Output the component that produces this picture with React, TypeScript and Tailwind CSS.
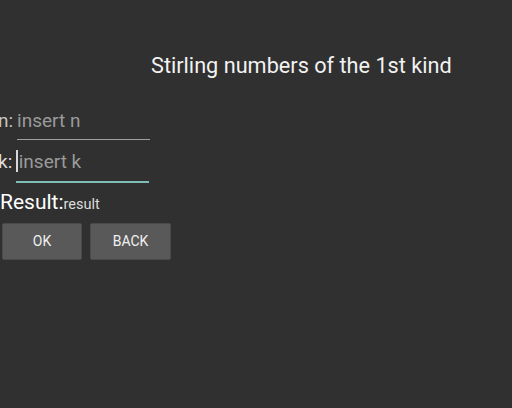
import React from 'react';

export default function App() {
  return (
    <div className="w-[512px] h-[408px] bg-[#303030] overflow-hidden font-['Roboto',sans-serif]">
      <div className="pt-[51px] pl-[151px] text-[21.7px] leading-[30px] text-[#f2f2f2]">
        Stirling numbers of the 1st kind
      </div>

      <div className="mt-[25px] flex items-start -ml-[2px]">
        <span className="text-[19px] leading-[24px] mt-[3px] text-[#c4c4c4]">n:</span>
        <div className="ml-[4px] w-[133px]">
          <div className="h-[33px] pt-[3px] text-[19px] leading-[24px] text-[#9a9a9a]">insert n</div>
          <div className="h-[1px] bg-[#9e9e9e]" />
        </div>
      </div>

      <div className="mt-[8px] flex items-start -ml-[2px]">
        <span className="text-[19px] leading-[24px] mt-[2px] text-[#dcdcdc]">k:</span>
        <div className="ml-[4px] w-[133px]">
          <div className="h-[33px] pt-[2px] flex items-start text-[19px] leading-[24px] text-[#9a9a9a]">
            <span className="w-[1.5px] h-[22px] bg-[#d8d8d8] mr-[1px]" />
            insert k
          </div>
          <div className="h-[2px] bg-[#7fbdb4]" />
        </div>
      </div>

      <div className="mt-[6px] flex items-baseline">
        <span className="text-[21px] leading-[26px] text-white">Result:</span>
        <span className="text-[14.5px] text-[#dcdcdc]">result</span>
      </div>

      <div className="mt-[7px] flex gap-[8px] pl-[2px]">
        <button className="w-[80px] h-[37px] bg-[#595959] border border-[#4a4a4a] rounded-[2px] text-[14px] text-[#f0f0f0]">
          OK
        </button>
        <button className="w-[81px] h-[37px] bg-[#595959] border border-[#4a4a4a] rounded-[2px] text-[14px] text-[#f0f0f0]">
          BACK
        </button>
      </div>
    </div>
  );
}
